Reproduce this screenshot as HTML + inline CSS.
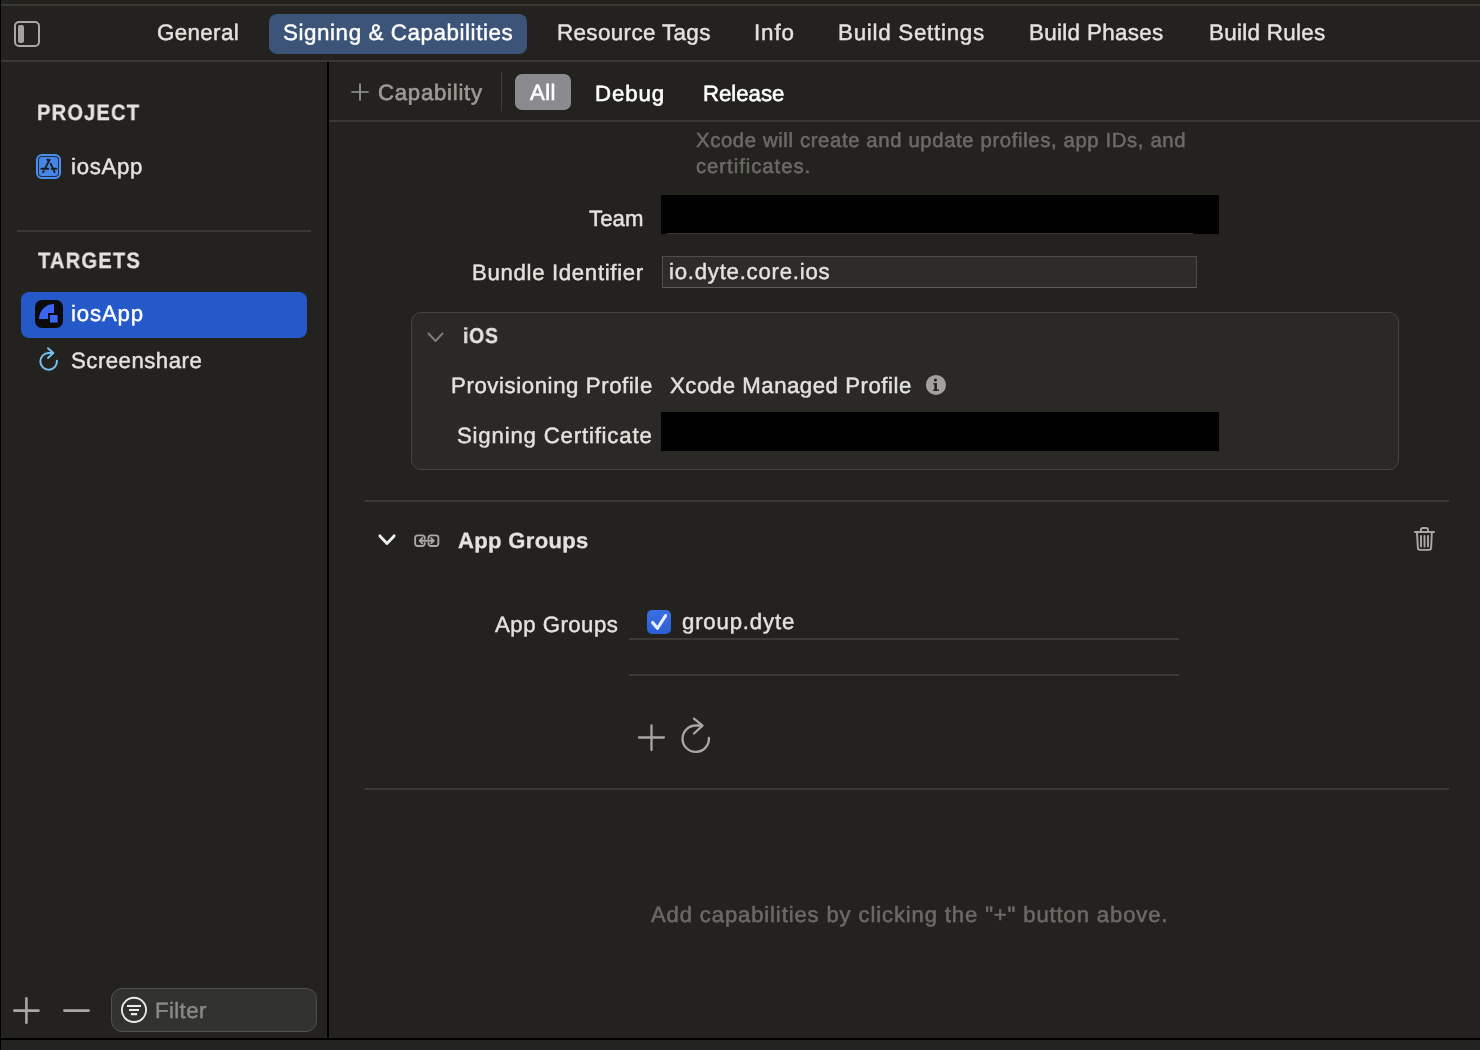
<!DOCTYPE html>
<html><head><meta charset="utf-8">
<style>
*{margin:0;padding:0;box-sizing:border-box}
html,body{width:1480px;height:1050px;overflow:hidden;background:#23221e}
body{position:relative;font-family:"Liberation Sans",sans-serif}
.a{position:absolute}
.t{position:absolute;white-space:nowrap;will-change:transform;text-rendering:geometricPrecision;-webkit-text-stroke:0.45px currentColor}
svg{position:absolute;overflow:visible}
</style></head><body>
<!-- left black edge -->
<div class="a" style="left:0;top:0;width:1px;height:1050px;background:#000"></div>
<!-- top separator -->
<div class="a" style="left:1px;top:4px;width:1479px;height:2px;background:#393934"></div>
<!-- tab bar separator -->
<div class="a" style="left:1px;top:60px;width:1479px;height:2px;background:#393834"></div>
<!-- sidebar vertical line -->
<div class="a" style="left:327px;top:62px;width:2px;height:976px;background:#000"></div>
<!-- toolbar bottom line -->
<div class="a" style="left:329px;top:120px;width:1151px;height:2px;background:#393834"></div>
<!-- bottom black line -->
<div class="a" style="left:0;top:1038px;width:1480px;height:2px;background:#000"></div>
<div class="a" style="left:1px;top:1040px;width:1479px;height:10px;background:#23241f"></div>

<!-- sidebar toggle icon -->
<div class="a" style="left:14px;top:21px;width:26px;height:26px;border:2px solid #a9a8a4;border-radius:5px"></div>
<div class="a" style="left:18px;top:25px;width:6px;height:18px;background:#a3a29e;border-radius:2px"></div>

<!-- selected tab pill -->
<div class="a" style="left:269px;top:14px;width:258px;height:40px;background:#3c5478;border-radius:8px"></div>

<!-- toolbar 2 -->
<svg style="left:351px;top:83px" width="18" height="18" viewBox="0 0 18 18"><path d="M9 1V17M1 9H17" stroke="#9b9a96" stroke-width="1.7" stroke-linecap="round"/></svg>
<div class="a" style="left:501px;top:72px;width:1px;height:39px;background:#3d3c38"></div>
<div class="a" style="left:515px;top:74px;width:56px;height:36px;background:#8b8a8e;border-radius:7px"></div>

<!-- sidebar -->
<div class="a" style="left:17px;top:230px;width:294px;height:2px;background:#393834"></div>
<div class="a" style="left:21px;top:292px;width:286px;height:46px;background:#2558c8;border-radius:8px"></div>

<!-- project icon -->
<div class="a" style="left:36px;top:154px;width:25px;height:25px;border-radius:6px;background:#4a8ef0"></div>
<div class="a" style="left:38px;top:156px;width:21px;height:21px;border-radius:4px;background:#1d2a3e"></div>
<div class="a" style="left:39px;top:157px;width:19px;height:19px;border-radius:3px;background:#4786e6"></div>
<svg style="left:36px;top:154px" width="25" height="25" viewBox="0 0 25 25"><path d="M13.6 5.8L9.4 13.6M11.4 5.5L12.6 7.2M14.7 9.8L18.6 18.2M5.4 14.8H12.3M15.9 14.8H20.4M7.1 18L7.9 17.2" stroke="#1c1c1c" stroke-width="1.9" stroke-linecap="round"/></svg>
<!-- target icon -->
<div class="a" style="left:35px;top:300px;width:28px;height:28px;border-radius:7px;background:#0b0b0d"></div>
<svg style="left:35px;top:300px" width="28" height="28" viewBox="0 0 28 28"><path d="M4 19A15 15 0 0 1 19 4V13H13V19Z" fill="#3a64f2"/><rect x="15" y="15" width="7.6" height="7.6" fill="#3a64f2"/></svg>
<!-- screenshare icon -->
<svg style="left:32px;top:342px" width="32" height="32" viewBox="0 0 32 32"><path d="M24.9 18.7A8.3 8.3 0 1 1 16.6 11.1H21" fill="none" stroke="#78c0f2" stroke-width="2" stroke-linecap="round"/><path d="M16 6.2L21.3 11L16 15.9" fill="none" stroke="#78c0f2" stroke-width="2" stroke-linecap="round" stroke-linejoin="round"/></svg>
<!-- bottom sidebar -->
<svg style="left:12px;top:996px" width="29" height="29" viewBox="0 0 29 29"><path d="M14.4 2.3V26.7M2.3 14.6H26.5" stroke="#a8a7a3" stroke-width="2.6" stroke-linecap="round"/></svg>
<svg style="left:62px;top:996px" width="29" height="29" viewBox="0 0 29 29"><path d="M2.4 14.6H26.6" stroke="#a8a7a3" stroke-width="2.6" stroke-linecap="round"/></svg>
<div class="a" style="left:111px;top:988px;width:206px;height:44px;background:#323231;border:1px solid #51514e;border-radius:11px"></div>
<svg style="left:121px;top:997px" width="26" height="26" viewBox="0 0 26 26"><circle cx="13" cy="12.9" r="12.1" fill="none" stroke="#ececec" stroke-width="1.9"/><path d="M6 9.05H20M8 13H18M9.9 17.1H16.1" stroke="#ececec" stroke-width="2.05"/></svg>

<!-- team black box -->
<div class="a" style="left:661px;top:195px;width:558px;height:39px;background:#000"></div>
<div class="a" style="left:667px;top:233px;width:526px;height:1px;background:#3a3935"></div>
<!-- bundle id field -->
<div class="a" style="left:662px;top:256px;width:535px;height:32px;background:#2d2c29;border:1px solid #4d4c48;border-bottom-color:#5e5d59"></div>

<!-- iOS box -->
<div class="a" style="left:411px;top:312px;width:988px;height:158px;background:#2a2926;border:1px solid #45443f;border-radius:10px"></div>
<svg style="left:427px;top:332px" width="17" height="11" viewBox="0 0 17 11"><path d="M1.5 1.5L8.5 9L15.5 1.5" fill="none" stroke="#7e7d79" stroke-width="2" stroke-linecap="round" stroke-linejoin="round"/></svg>
<svg style="left:926px;top:375px" width="20" height="20" viewBox="0 0 20 20"><circle cx="9.95" cy="9.95" r="10.05" fill="#a2a19e"/><g fill="#1f1e1b"><rect x="8.45" y="8.3" width="2.45" height="7.5"/><rect x="7.15" y="8.3" width="3.75" height="1.05"/><rect x="7.15" y="14.4" width="5.7" height="1.45"/><circle cx="9.45" cy="5.05" r="1.5"/></g></svg>
<div class="a" style="left:661px;top:412px;width:558px;height:39px;background:#000"></div>

<!-- separators -->
<div class="a" style="left:365px;top:500px;width:1084px;height:2px;background:#393834"></div>
<div class="a" style="left:365px;top:788px;width:1084px;height:2px;background:#393834"></div>

<!-- app groups header -->
<svg style="left:378px;top:534px" width="18" height="12" viewBox="0 0 18 12"><path d="M1.9 1.9L9 9.4L16.1 1.9" fill="none" stroke="#f0f0f0" stroke-width="2.9" stroke-linecap="round" stroke-linejoin="round"/></svg>
<svg style="left:413px;top:533px" width="28" height="16" viewBox="0 0 28 16"><path d="M11.75 5.6V4.85A2.5 2.5 0 0 0 9.25 2.35H4.65A2.5 2.5 0 0 0 2.15 4.85V10.55A2.5 2.5 0 0 0 4.65 13.05H9.25A2.5 2.5 0 0 0 11.75 10.55V9.9M15.45 5.6V4.85A2.5 2.5 0 0 1 17.95 2.35H22.85A2.5 2.5 0 0 1 25.35 4.85V10.55A2.5 2.5 0 0 1 22.85 13.05H17.95A2.5 2.5 0 0 1 15.45 10.55V9.9M6.6 7.7H20.8M9.2 5.1L6.6 7.7L9.2 10.3M18.2 5.1L20.8 7.7L18.2 10.3" fill="none" stroke="#a9a8a4" stroke-width="1.9" stroke-linecap="round" stroke-linejoin="round"/></svg>
<svg style="left:1413px;top:526px" width="24" height="26" viewBox="0 0 24 26"><path d="M1.95 6H21.05M7.85 5.5V4A2.05 2.05 0 0 1 9.9 1.95H13A2.05 2.05 0 0 1 15.05 4V5.5M3.95 6.5L4.9 21.85A2 2 0 0 0 6.9 23.85H16.1A2 2 0 0 0 18.1 21.85L18.85 6.5M8 9.95V20.45M11.5 9.95V20.45M15 9.95V20.45" fill="none" stroke="#a9a8a4" stroke-width="1.9" stroke-linecap="round" stroke-linejoin="round"/></svg>

<!-- app groups content -->
<div class="a" style="left:647px;top:610px;width:24px;height:24px;border-radius:5px;background:linear-gradient(#3a6ee3,#2d5fd3)"></div>
<svg style="left:647px;top:610px" width="24" height="24" viewBox="0 0 24 24"><path d="M5.6 12.5L10.4 18.3L18.6 5.6" fill="none" stroke="#e9eefb" stroke-width="3.1" stroke-linecap="round" stroke-linejoin="round"/></svg>
<div class="a" style="left:629px;top:638px;width:550px;height:2px;background:#3a3935"></div>
<div class="a" style="left:629px;top:674px;width:550px;height:2px;background:#3a3935"></div>
<svg style="left:637px;top:723px" width="29" height="29" viewBox="0 0 29 29"><path d="M14.5 2.3V27M2 14.5H26.9" stroke="#a8a7a3" stroke-width="2.3" stroke-linecap="round"/></svg>
<svg style="left:679px;top:712px" width="34" height="44" viewBox="0 0 34 44"><path d="M29.9 26A13.2 13.2 0 1 1 16.7 13.5H23" fill="none" stroke="#a8a7a3" stroke-width="2.3" stroke-linecap="round"/><path d="M15 6.6L23.5 13.6L15 21.5" fill="none" stroke="#a8a7a3" stroke-width="2.3" stroke-linecap="round" stroke-linejoin="round"/></svg>

<div class="t" style="left:156.80px;top:21.93px;font-size:22.40px;line-height:22.40px;letter-spacing:0.336px;transform-origin:0 0;transform:scaleX(1.0);font-weight:400;color:#e3e2de">General</div>
<div class="t" style="left:282.80px;top:21.93px;font-size:22.40px;line-height:22.40px;letter-spacing:0.566px;transform-origin:0 0;transform:scaleX(1.0);font-weight:400;color:#ffffff">Signing &amp; Capabilities</div>
<div class="t" style="left:556.80px;top:21.93px;font-size:22.40px;line-height:22.40px;letter-spacing:0.371px;transform-origin:0 0;transform:scaleX(1.0);font-weight:400;color:#e3e2de">Resource Tags</div>
<div class="t" style="left:754.00px;top:21.93px;font-size:22.40px;line-height:22.40px;letter-spacing:0.869px;transform-origin:0 0;transform:scaleX(1.0);font-weight:400;color:#e3e2de">Info</div>
<div class="t" style="left:838.00px;top:21.93px;font-size:22.40px;line-height:22.40px;letter-spacing:0.714px;transform-origin:0 0;transform:scaleX(1.0);font-weight:400;color:#e3e2de">Build Settings</div>
<div class="t" style="left:1029.00px;top:21.93px;font-size:22.40px;line-height:22.40px;letter-spacing:0.318px;transform-origin:0 0;transform:scaleX(1.0);font-weight:400;color:#e3e2de">Build Phases</div>
<div class="t" style="left:1209.00px;top:21.93px;font-size:22.40px;line-height:22.40px;letter-spacing:0.294px;transform-origin:0 0;transform:scaleX(1.0);font-weight:400;color:#e3e2de">Build Rules</div>
<div class="t" style="left:378.00px;top:81.70px;font-size:22.20px;line-height:22.20px;letter-spacing:0.741px;transform-origin:0 0;transform:scaleX(1.0);font-weight:400;color:#9b9a96;-webkit-text-stroke:0.6px currentColor">Capability</div>
<div class="t" style="left:530.00px;top:82.20px;font-size:22.20px;line-height:22.20px;letter-spacing:0.386px;transform-origin:0 0;transform:scaleX(1.0);font-weight:400;color:#ffffff;-webkit-text-stroke:0.6px currentColor">All</div>
<div class="t" style="left:595.40px;top:82.70px;font-size:22.20px;line-height:22.20px;letter-spacing:0.940px;transform-origin:0 0;transform:scaleX(1.0);font-weight:400;color:#ffffff;-webkit-text-stroke:0.6px currentColor">Debug</div>
<div class="t" style="left:703.00px;top:82.70px;font-size:22.20px;line-height:22.20px;letter-spacing:-0.011px;transform-origin:0 0;transform:scaleX(1.0);font-weight:400;color:#ffffff;-webkit-text-stroke:0.6px currentColor">Release</div>
<div class="t" style="left:37.10px;top:101.61px;font-size:22.30px;line-height:22.30px;letter-spacing:1.348px;transform-origin:0 0;transform:scaleX(0.9);font-weight:700;color:#e3e2de;-webkit-text-stroke:0.3px currentColor">PROJECT</div>
<div class="t" style="left:71.00px;top:155.50px;font-size:22.20px;line-height:22.20px;letter-spacing:0.700px;transform-origin:0 0;transform:scaleX(1.0);font-weight:400;color:#e3e2de">iosApp</div>
<div class="t" style="left:38.00px;top:249.61px;font-size:22.30px;line-height:22.30px;letter-spacing:1.370px;transform-origin:0 0;transform:scaleX(0.9);font-weight:700;color:#e3e2de;-webkit-text-stroke:0.3px currentColor">TARGETS</div>
<div class="t" style="left:70.60px;top:303.30px;font-size:22.20px;line-height:22.20px;letter-spacing:0.840px;transform-origin:0 0;transform:scaleX(1.0);font-weight:400;color:#ffffff">iosApp</div>
<div class="t" style="left:70.60px;top:349.70px;font-size:22.20px;line-height:22.20px;letter-spacing:0.494px;transform-origin:0 0;transform:scaleX(1.0);font-weight:400;color:#e3e2de">Screenshare</div>
<div class="t" style="left:155.30px;top:999.70px;font-size:22.20px;line-height:22.20px;letter-spacing:0.397px;transform-origin:0 0;transform:scaleX(1.0);font-weight:400;color:#8b8a88">Filter</div>
<div class="t" style="left:695.80px;top:131.31px;font-size:20.30px;line-height:20.30px;letter-spacing:0.635px;transform-origin:0 0;transform:scaleX(1.0);font-weight:400;color:#6b6a66;-webkit-text-stroke:0.55px currentColor">Xcode will create and update profiles, app IDs, and</div>
<div class="t" style="left:695.80px;top:157.11px;font-size:20.30px;line-height:20.30px;letter-spacing:0.964px;transform-origin:0 0;transform:scaleX(1.0);font-weight:400;color:#6b6a66;-webkit-text-stroke:0.55px currentColor">certificates.</div>
<div class="t" style="left:589.00px;top:207.70px;font-size:22.20px;line-height:22.20px;letter-spacing:0.076px;transform-origin:0 0;transform:scaleX(1.0);font-weight:400;color:#e3e2de">Team</div>
<div class="t" style="left:472.00px;top:261.70px;font-size:22.20px;line-height:22.20px;letter-spacing:0.677px;transform-origin:0 0;transform:scaleX(1.0);font-weight:400;color:#e3e2de">Bundle Identifier</div>
<div class="t" style="left:668.50px;top:261.30px;font-size:22.20px;line-height:22.20px;letter-spacing:0.758px;transform-origin:0 0;transform:scaleX(1.0);font-weight:400;color:#e3e2de">io.dyte.core.ios</div>
<div class="t" style="left:462.70px;top:326.29px;font-size:21.50px;line-height:21.50px;letter-spacing:0.874px;transform-origin:0 0;transform:scaleX(0.9);font-weight:700;color:#e3e2de;-webkit-text-stroke:0.3px currentColor">iOS</div>
<div class="t" style="left:451.10px;top:374.70px;font-size:22.20px;line-height:22.20px;letter-spacing:0.596px;transform-origin:0 0;transform:scaleX(1.0);font-weight:400;color:#e3e2de">Provisioning Profile</div>
<div class="t" style="left:669.80px;top:374.70px;font-size:22.20px;line-height:22.20px;letter-spacing:0.529px;transform-origin:0 0;transform:scaleX(1.0);font-weight:400;color:#e3e2de">Xcode Managed Profile</div>
<div class="t" style="left:456.90px;top:425.30px;font-size:22.20px;line-height:22.20px;letter-spacing:0.816px;transform-origin:0 0;transform:scaleX(1.0);font-weight:400;color:#e3e2de">Signing Certificate</div>
<div class="t" style="left:457.60px;top:529.87px;font-size:22.00px;line-height:22.00px;letter-spacing:0.359px;transform-origin:0 0;transform:scaleX(1.0);font-weight:700;color:#e3e2de;-webkit-text-stroke:0.3px currentColor">App Groups</div>
<div class="t" style="left:495.00px;top:613.50px;font-size:22.20px;line-height:22.20px;letter-spacing:0.499px;transform-origin:0 0;transform:scaleX(1.0);font-weight:400;color:#e3e2de">App Groups</div>
<div class="t" style="left:681.70px;top:611.20px;font-size:22.20px;line-height:22.20px;letter-spacing:0.821px;transform-origin:0 0;transform:scaleX(1.0);font-weight:400;color:#e3e2de">group.dyte</div>
<div class="t" style="left:651.40px;top:903.57px;font-size:22.00px;line-height:22.00px;letter-spacing:0.898px;transform-origin:0 0;transform:scaleX(1.0);font-weight:400;color:#6b6a66;-webkit-text-stroke:0.55px currentColor">Add capabilities by clicking the "+" button above.</div>
</body></html>
